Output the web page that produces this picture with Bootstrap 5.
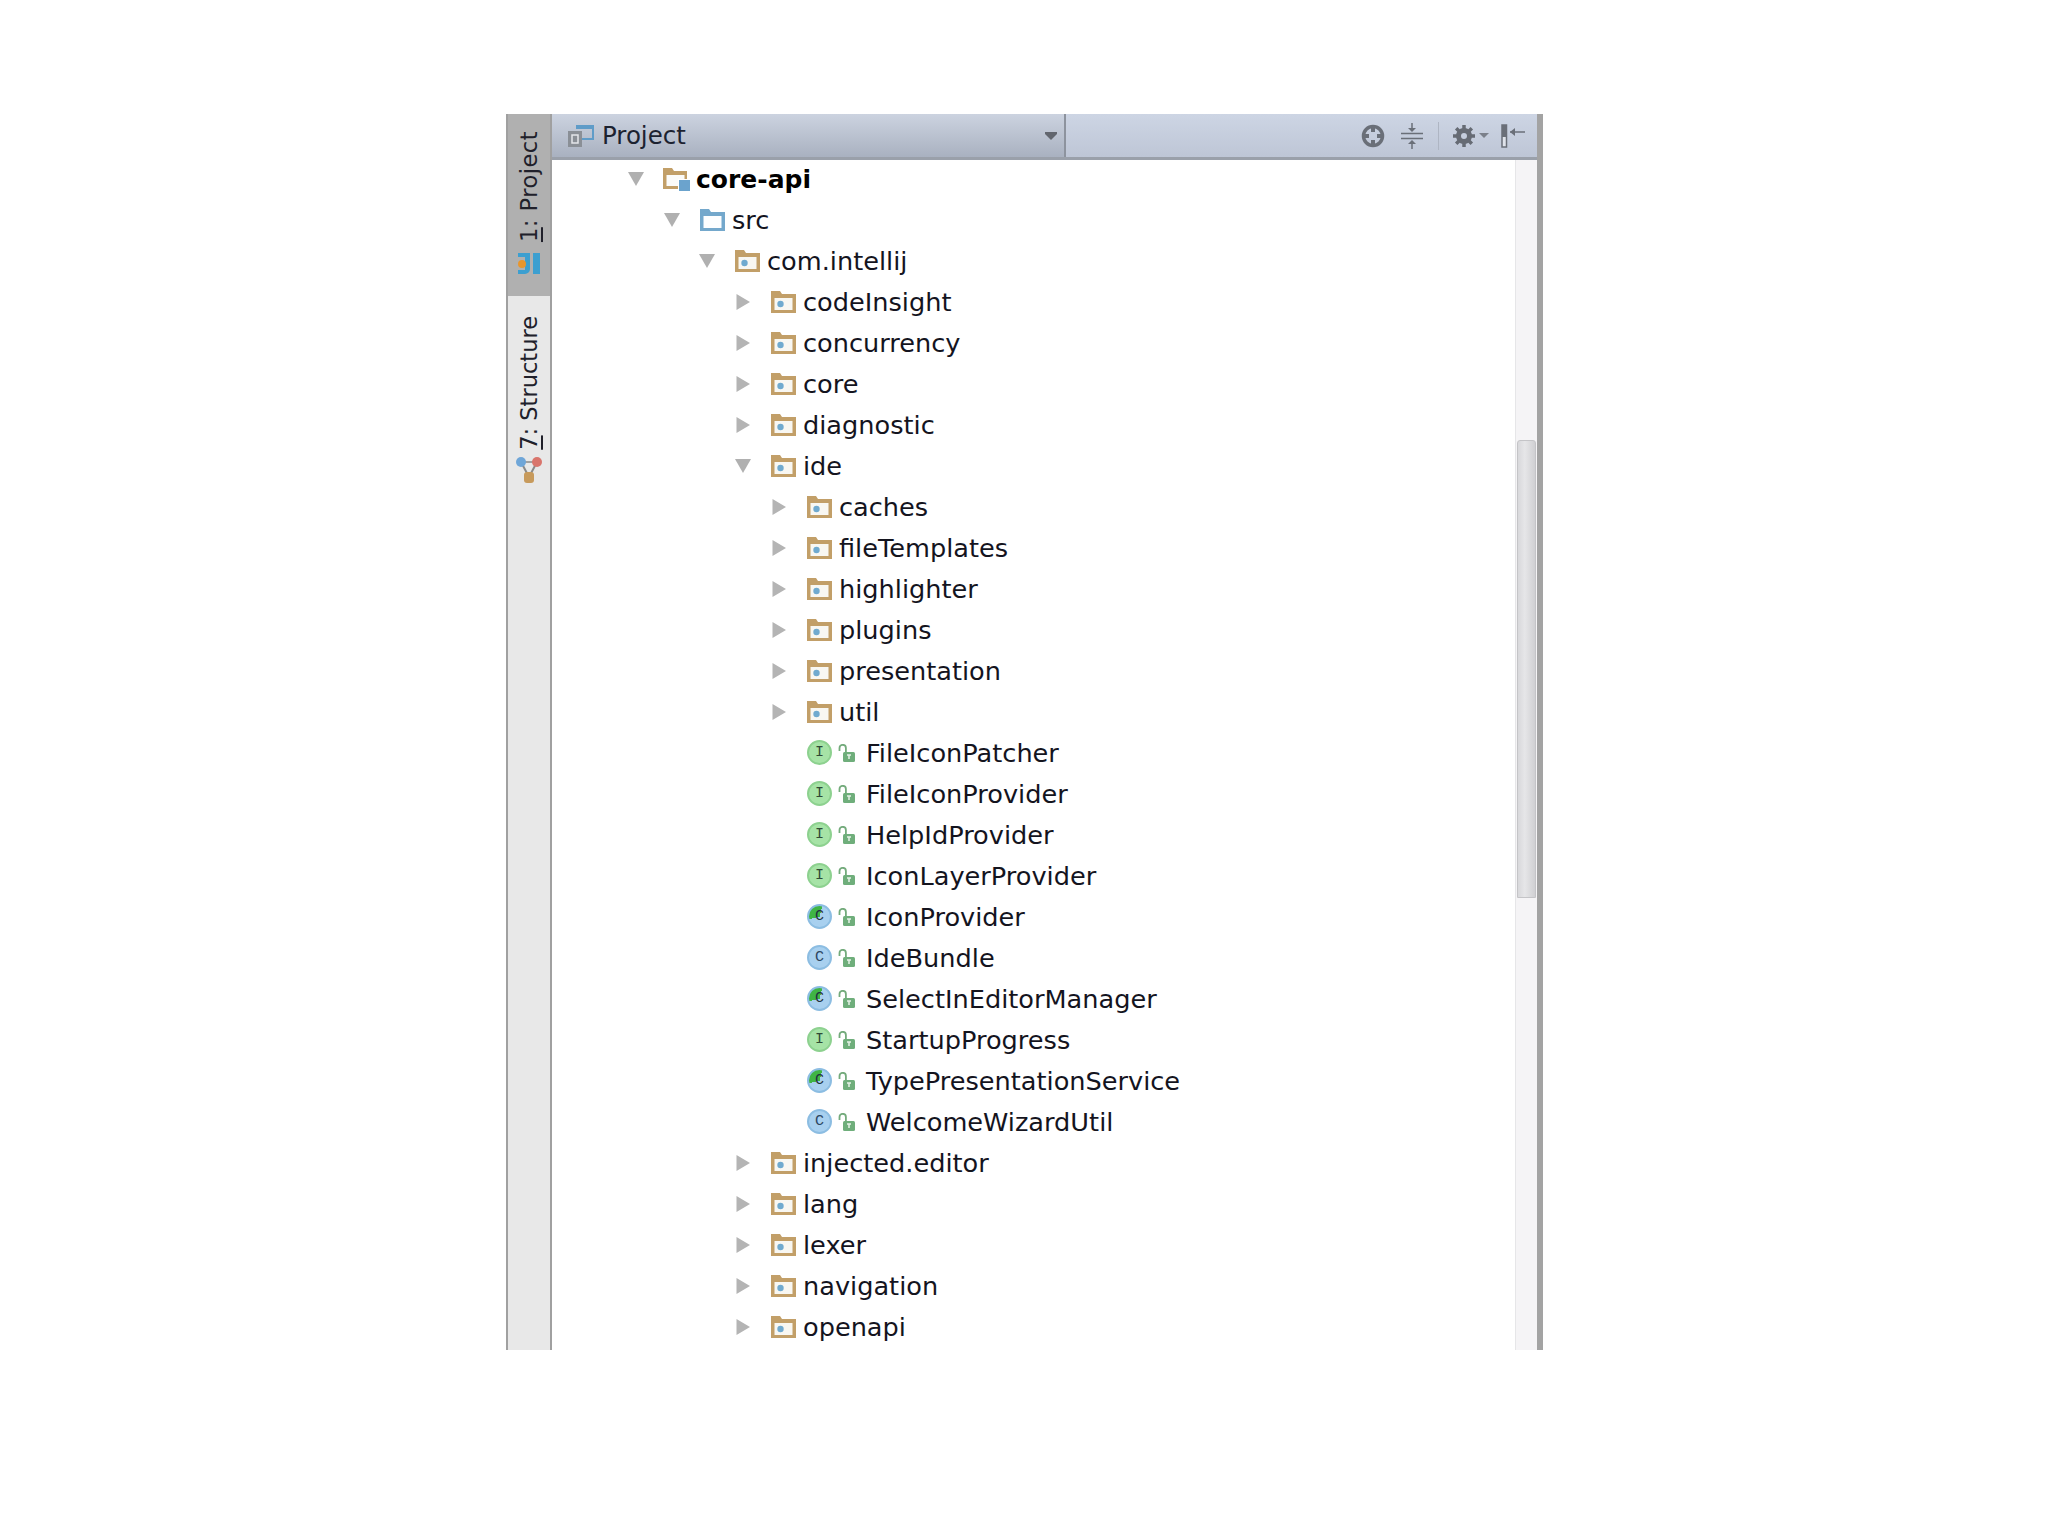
<!DOCTYPE html>
<html lang="en">
<head>
    <meta charset="UTF-8">
    <title>Project tool window</title>
    <link href="https://cdn.jsdelivr.net/npm/bootstrap@5.3.2/dist/css/bootstrap.min.css" rel="stylesheet">
    <script src="https://cdn.jsdelivr.net/npm/bootstrap@5.3.2/dist/js/bootstrap.bundle.min.js"></script>
    <style>
        body {
            background: #fff;
            font-family: "DejaVu Sans", sans-serif;
            color: #14141e;
        }
        .ide-panel {
            width: 1037px;
            height: 1236px;
            margin: 114px 0 0 506px;
            border-right: 6px solid #a3a3a3;
        }
        .side-bar {
            width: 46px;
            background: #e8e8e8;
            border-left: 2px solid #a0a0a0;
            border-right: 2px solid #a0a0a0;
        }
        .side-tab {
            font-size: 22.5px;
            line-height: 1;
            color: #20202a;
        }
        .side-tab span {
            writing-mode: vertical-rl;
            transform: rotate(180deg);
        }
        .side-tab.is-active {
            height: 182px;
            background: #b0b0b0;
            padding-top: 17px;
            gap: 10px;
            letter-spacing: .5px;
        }
        .side-tab.is-plain {
            padding-top: 20px;
            gap: 6px;
        }
        .tool-head {
            height: 46px;
            background: linear-gradient(#cdd5e4, #bec6d6);
            border-bottom: 3px solid #9aa0aa;
        }
        .combo-box {
            width: 514px;
            background: linear-gradient(#ccd3e0, #a9b1c0);
            border-right: 2px solid #8d939e;
            padding: 1px 7px 0 16px;
            font-size: 24.5px;
            color: #1c2230;
        }
        .tool-icons {
            padding-right: 12px;
        }
        .tool-sep {
            width: 1px;
            height: 28px;
            background: #aeb5c3;
            margin: 0 14px 0 15px;
        }
        .tree-rows {
            margin-top: -1px;
            font-size: 25.6px;
        }
        .tree-row {
            height: 41px;
            white-space: nowrap;
        }
        .tree-row .t-arrow {
            width: 16px;
            height: 16px;
            margin: 0 19px 2px 0;
        }
        .tree-row .t-folder {
            width: 27px;
            height: 24px;
            margin: 0 6px 2px 0;
        }
        .class-badge {
            width: 25px;
            height: 25px;
            margin: 0 6px 2px 0;
            border-radius: 50%;
            font: 400 15px/1 "Liberation Mono", monospace;
        }
        .badge-int {
            background: #a6e3a6;
            border: 2px solid #8dd18f;
            color: #2f4a36;
        }
        .badge-cls {
            background: #a8d0ef;
            border: 2px solid #8cbde2;
            color: #2c4560;
        }
        .badge-abs {
            background: conic-gradient(#3fb544 0 15deg, #a8d0ef 15deg 255deg, #3fb544 255deg 360deg);
            border: 2px solid #8cbde2;
            color: #1f3040;
        }
        .tree-row .t-lock {
            width: 17px;
            height: 18px;
            margin: 0 11px 2px 0;
        }
        .lvl-0 { padding-left: 76px; }
        .lvl-1 { padding-left: 112px; }
        .lvl-2 { padding-left: 147px; }
        .lvl-3 { padding-left: 183px; }
        .lvl-4 { padding-left: 219px; }
        .lvl-5 { padding-left: 255px; }
        .root-name { font-weight: 700; font-size: 25px; color: #000; }
        .scroll-track {
            width: 22px;
            background: #f5f4f6;
            border-left: 1px solid #e6e6e8;
            padding: 280px 1px 0 1px;
        }
        .scroll-thumb {
            height: 458px;
            background: linear-gradient(90deg, #d8d8db, #e6e6e8 40%, #d0d0d3);
            border: 1px solid #c4c4c7;
            border-radius: 3px 3px 0 0;
        }
    </style>
</head>
<body>
    <svg width="0" height="0" class="position-absolute">
        <symbol id="i-down" viewBox="0 0 16 16"><path d="M0 1h16L8 15z" fill="#b0b0b0"/></symbol>
        <symbol id="i-right" viewBox="0 0 16 16"><path d="M1.500 0 15 8 1.500 16z" fill="#b4b4b4"/></symbol>
        <symbol id="i-pkg" viewBox="0 0 27 24">
            <path d="M1 1h9l2 3h14v19H1z" fill="#c29f68"/>
            <rect x="4.500" y="8" width="18" height="12" fill="#f8f7f2"/>
            <circle cx="10.500" cy="14" r="3.200" fill="#70aacf"/>
        </symbol>
        <symbol id="i-src" viewBox="0 0 27 24">
            <path d="M1 1h9l2 3h14v19H1z" fill="#74a8cc"/>
            <rect x="4.500" y="8" width="18" height="12" fill="#fdfeff"/>
        </symbol>
        <symbol id="i-mod" viewBox="0 0 27 24">
            <path d="M0 1h9l2 3h13v18H0z" fill="#c29f68"/>
            <rect x="3.500" y="8" width="18" height="11" fill="#fbfbf9"/>
            <rect x="15" y="12" width="12" height="12" fill="#fff"/>
            <rect x="16" y="13" width="11" height="11" fill="#6ba3cd"/>
        </symbol>
        <symbol id="i-lock" viewBox="0 0 17 18">
            <path d="M1.500 7V4a3.200 3.200 0 0 1 6.400 0v4" fill="none" stroke="#74ab7c" stroke-width="1.800"/>
            <rect x="5" y="8" width="12" height="10" rx="1.500" fill="#6fae7b"/>
            <path d="M9 11h4M11 11v4" stroke="#e6f2e8" stroke-width="1.500"/>
        </symbol>
    </svg>

    <div class="ide-panel d-flex">
        <div class="side-bar d-flex flex-column flex-shrink-0">
            <div class="side-tab is-active d-flex flex-column align-items-center">
                <span><u>1</u>: Project</span>
                <svg width="24" height="24" viewBox="0 0 24 24">
                    <path d="M1 1h12v16a5 5 0 0 1-5 5H1v-4h7V5H1z" fill="#3c9fd0"/>
                    <rect x="16" y="1" width="7" height="21" fill="#3c9fd0"/>
                    <circle cx="5" cy="12" r="4" fill="#e8962e"/>
                </svg>
            </div>
            <div class="side-tab is-plain d-flex flex-column align-items-center">
                <span><u>7</u>: Structure</span>
                <svg width="28" height="28" viewBox="0 0 28 28">
                    <path d="M6 6 14 21 22 6" fill="none" stroke="#8a8a8a" stroke-width="2"/>
                    <path d="M6 6h16" stroke="#8a8a8a" stroke-width="1.500"/>
                    <circle cx="6" cy="6" r="5" fill="#6fa6d8"/>
                    <circle cx="22" cy="6" r="5" fill="#d9756c"/>
                    <rect x="9" y="16" width="10" height="11" rx="3" fill="#c79a5c"/>
                </svg>
            </div>
        </div>

        <div class="flex-grow-1 d-flex flex-column overflow-hidden">
            <div class="tool-head d-flex flex-shrink-0">
                <div class="combo-box d-flex align-items-center">
                    <svg width="26" height="22" viewBox="0 0 26 22" class="me-2">
                        <path d="M8 1h17v13H12" fill="none" stroke="#5f9cc8" stroke-width="2"/>
                        <path d="M8 1h17v3H8z" fill="#5f9cc8"/>
                        <rect x="0" y="6" width="14" height="16" fill="#8a8f96"/>
                        <rect x="4" y="10" width="6" height="8" fill="none" stroke="#e4e6ea" stroke-width="1.500"/>
                    </svg>
                    <span>Project</span>
                    <svg width="12" height="8" viewBox="0 0 12 8" class="ms-auto">
                        <path d="M0 0h12v2l-6 6-6-6z" fill="#62666e"/>
                    </svg>
                </div>
                <div class="tool-icons flex-grow-1 d-flex align-items-center justify-content-end">
                    <svg width="24" height="24" viewBox="0 0 24 24" class="me-3">
                        <circle cx="12" cy="12" r="9.500" fill="none" stroke="#6a6f78" stroke-width="3.500"/>
                        <path d="M12 3v5M12 16v5M3 12h5M16 12h5" stroke="#6a6f78" stroke-width="4"/>
                    </svg>
                    <svg width="22" height="26" viewBox="0 0 22 26">
                        <path d="M0 10.500h22M0 15.500h22M11 0v8M11 18v8" stroke="#6a6f78" stroke-width="1.500"/>
                        <path d="M7 5h8l-4 4zM7 21h8l-4-4z" fill="#6a6f78"/>
                    </svg>
                    <div class="tool-sep"></div>
                    <svg width="22" height="24" viewBox="0 0 22 24">
                        <circle cx="11" cy="12" r="5.500" fill="none" stroke="#666b74" stroke-width="5"/>
                        <path d="M11 1v4M11 19v4M0 12h4M18 12h4M3.200 4.200l3 3M15.800 16.800l3 3M18.800 4.200l-3 3M6.200 16.800l-3 3" stroke="#666b74" stroke-width="3.500"/>
                    </svg>
                    <svg width="10" height="6" viewBox="0 0 10 6" class="mx-1">
                        <path d="M0 0h10L5 5z" fill="#7b808a"/>
                    </svg>
                    <svg width="24" height="24" viewBox="0 0 24 24" class="ms-2">
                        <rect x="1" y="1" width="4.500" height="22" fill="#dfe3ea" stroke="#6a6f78" stroke-width="1.500"/>
                        <rect x="1" y="1" width="4.500" height="12" fill="#6a6f78"/>
                        <path d="M9 8h15" stroke="#6a6f78" stroke-width="1.500"/>
                        <path d="M14 4v8l-5-4z" fill="#6a6f78"/>
                    </svg>
                </div>
            </div>

            <div class="flex-grow-1 d-flex overflow-hidden">
                <div class="tree-rows flex-grow-1">
                    <div class="tree-row lvl-0 d-flex align-items-center"><svg class="t-arrow"><use href="#i-down"/></svg><svg class="t-folder"><use href="#i-mod"/></svg><span class="root-name">core-api</span></div>
                    <div class="tree-row lvl-1 d-flex align-items-center"><svg class="t-arrow"><use href="#i-down"/></svg><svg class="t-folder"><use href="#i-src"/></svg><span>src</span></div>
                    <div class="tree-row lvl-2 d-flex align-items-center"><svg class="t-arrow"><use href="#i-down"/></svg><svg class="t-folder"><use href="#i-pkg"/></svg><span>com.intellij</span></div>
                    <div class="tree-row lvl-3 d-flex align-items-center"><svg class="t-arrow"><use href="#i-right"/></svg><svg class="t-folder"><use href="#i-pkg"/></svg><span>codeInsight</span></div>
                    <div class="tree-row lvl-3 d-flex align-items-center"><svg class="t-arrow"><use href="#i-right"/></svg><svg class="t-folder"><use href="#i-pkg"/></svg><span>concurrency</span></div>
                    <div class="tree-row lvl-3 d-flex align-items-center"><svg class="t-arrow"><use href="#i-right"/></svg><svg class="t-folder"><use href="#i-pkg"/></svg><span>core</span></div>
                    <div class="tree-row lvl-3 d-flex align-items-center"><svg class="t-arrow"><use href="#i-right"/></svg><svg class="t-folder"><use href="#i-pkg"/></svg><span>diagnostic</span></div>
                    <div class="tree-row lvl-3 d-flex align-items-center"><svg class="t-arrow"><use href="#i-down"/></svg><svg class="t-folder"><use href="#i-pkg"/></svg><span>ide</span></div>
                    <div class="tree-row lvl-4 d-flex align-items-center"><svg class="t-arrow"><use href="#i-right"/></svg><svg class="t-folder"><use href="#i-pkg"/></svg><span>caches</span></div>
                    <div class="tree-row lvl-4 d-flex align-items-center"><svg class="t-arrow"><use href="#i-right"/></svg><svg class="t-folder"><use href="#i-pkg"/></svg><span>fileTemplates</span></div>
                    <div class="tree-row lvl-4 d-flex align-items-center"><svg class="t-arrow"><use href="#i-right"/></svg><svg class="t-folder"><use href="#i-pkg"/></svg><span>highlighter</span></div>
                    <div class="tree-row lvl-4 d-flex align-items-center"><svg class="t-arrow"><use href="#i-right"/></svg><svg class="t-folder"><use href="#i-pkg"/></svg><span>plugins</span></div>
                    <div class="tree-row lvl-4 d-flex align-items-center"><svg class="t-arrow"><use href="#i-right"/></svg><svg class="t-folder"><use href="#i-pkg"/></svg><span>presentation</span></div>
                    <div class="tree-row lvl-4 d-flex align-items-center"><svg class="t-arrow"><use href="#i-right"/></svg><svg class="t-folder"><use href="#i-pkg"/></svg><span>util</span></div>
                    <div class="tree-row lvl-5 d-flex align-items-center"><div class="class-badge badge-int d-flex align-items-center justify-content-center">I</div><svg class="t-lock"><use href="#i-lock"/></svg><span>FileIconPatcher</span></div>
                    <div class="tree-row lvl-5 d-flex align-items-center"><div class="class-badge badge-int d-flex align-items-center justify-content-center">I</div><svg class="t-lock"><use href="#i-lock"/></svg><span>FileIconProvider</span></div>
                    <div class="tree-row lvl-5 d-flex align-items-center"><div class="class-badge badge-int d-flex align-items-center justify-content-center">I</div><svg class="t-lock"><use href="#i-lock"/></svg><span>HelpIdProvider</span></div>
                    <div class="tree-row lvl-5 d-flex align-items-center"><div class="class-badge badge-int d-flex align-items-center justify-content-center">I</div><svg class="t-lock"><use href="#i-lock"/></svg><span>IconLayerProvider</span></div>
                    <div class="tree-row lvl-5 d-flex align-items-center"><div class="class-badge badge-abs d-flex align-items-center justify-content-center">C</div><svg class="t-lock"><use href="#i-lock"/></svg><span>IconProvider</span></div>
                    <div class="tree-row lvl-5 d-flex align-items-center"><div class="class-badge badge-cls d-flex align-items-center justify-content-center">C</div><svg class="t-lock"><use href="#i-lock"/></svg><span>IdeBundle</span></div>
                    <div class="tree-row lvl-5 d-flex align-items-center"><div class="class-badge badge-abs d-flex align-items-center justify-content-center">C</div><svg class="t-lock"><use href="#i-lock"/></svg><span>SelectInEditorManager</span></div>
                    <div class="tree-row lvl-5 d-flex align-items-center"><div class="class-badge badge-int d-flex align-items-center justify-content-center">I</div><svg class="t-lock"><use href="#i-lock"/></svg><span>StartupProgress</span></div>
                    <div class="tree-row lvl-5 d-flex align-items-center"><div class="class-badge badge-abs d-flex align-items-center justify-content-center">C</div><svg class="t-lock"><use href="#i-lock"/></svg><span>TypePresentationService</span></div>
                    <div class="tree-row lvl-5 d-flex align-items-center"><div class="class-badge badge-cls d-flex align-items-center justify-content-center">C</div><svg class="t-lock"><use href="#i-lock"/></svg><span>WelcomeWizardUtil</span></div>
                    <div class="tree-row lvl-3 d-flex align-items-center"><svg class="t-arrow"><use href="#i-right"/></svg><svg class="t-folder"><use href="#i-pkg"/></svg><span>injected.editor</span></div>
                    <div class="tree-row lvl-3 d-flex align-items-center"><svg class="t-arrow"><use href="#i-right"/></svg><svg class="t-folder"><use href="#i-pkg"/></svg><span>lang</span></div>
                    <div class="tree-row lvl-3 d-flex align-items-center"><svg class="t-arrow"><use href="#i-right"/></svg><svg class="t-folder"><use href="#i-pkg"/></svg><span>lexer</span></div>
                    <div class="tree-row lvl-3 d-flex align-items-center"><svg class="t-arrow"><use href="#i-right"/></svg><svg class="t-folder"><use href="#i-pkg"/></svg><span>navigation</span></div>
                    <div class="tree-row lvl-3 d-flex align-items-center"><svg class="t-arrow"><use href="#i-right"/></svg><svg class="t-folder"><use href="#i-pkg"/></svg><span>openapi</span></div>
                </div>
                <div class="scroll-track flex-shrink-0">
                    <div class="scroll-thumb"></div>
                </div>
            </div>
        </div>
    </div>
</body>
</html>
